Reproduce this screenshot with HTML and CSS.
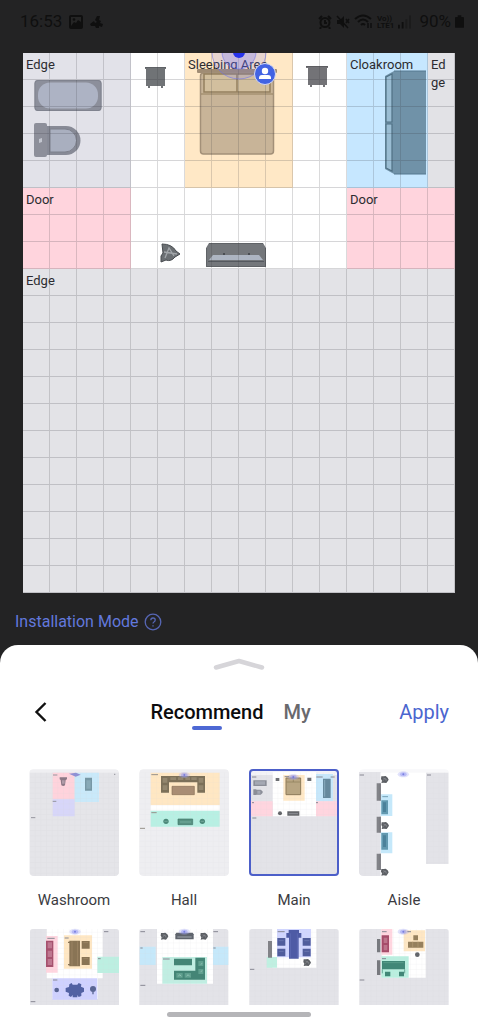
FILE: index.html
```html
<!DOCTYPE html>
<html lang="en">
<head>
<meta charset="utf-8">
<meta name="viewport" content="width=device-width, initial-scale=1">
<title>Room layout</title>
<link rel="stylesheet" href="styles.css">
</head>
<body>
<svg class="defs" aria-hidden="true">
  <defs>
    <pattern id="mini-grid" x="30" y="37" width="17" height="16" patternUnits="userSpaceOnUse">
      <path d="M16.500 0V16M0 15.500H17" stroke="#cfcfd6" stroke-width="1" fill="none"/>
    </pattern>
    <g id="radar"><ellipse rx="17" ry="9" fill="#a9acf4" opacity=".35"/><ellipse rx="10" ry="6" fill="#8a8ef0" opacity=".45"/><circle r="3" fill="#6066d8" opacity=".7"/></g>
    <g id="plant"><path d="M-10-10L-3-10 3-11 9-6 12 0 9 5 5 10-3 9-10 10-8 3-11-2Z" fill="#5c5f64"/><path d="M-6 5L1-5 5 4M-5-5L7 0" stroke="#8e9196" stroke-width="1.500" fill="none"/></g>
  </defs>
</svg>
<div class="screen">
  <header class="status">
    <div class="status-side">
      <span>16:53</span>
      <svg width="14" height="14" viewBox="0 0 14 14"><rect width="14" height="14" rx="2" fill="#0f0f0f"/><path d="M2 11V2H12V7L9 5 7 8 5 7Z" fill="#252525"/><circle cx="5" cy="4.500" r="1.300" fill="#0f0f0f"/></svg>
      <svg width="13" height="14" viewBox="0 0 13 14"><path d="M7 1L10 1 9 5 11 6 10 8 13 9 12 12 9 11 9 13 6 13 5 11 1 11 0 9 4 6 5 8 7 7 5 5Z" fill="#0f0f0f"/></svg>
    </div>
    <div class="status-side status-right">
      <svg width="14" height="14" viewBox="0 0 14 14" fill="none" stroke="#0f0f0f" stroke-width="2"><circle cx="7" cy="7.500" r="4.500"/><path d="M7 5V8H9M1 4L4 1M10 1L13 4M3 12L2 14M11 12L12 14"/></svg>
      <svg width="14" height="14" viewBox="0 0 14 14"><path d="M1 5H4L8 1V13L4 9H1Z" fill="#0f0f0f"/><path d="M1 1L12 13M10 4L13 8M13 4L10 8" stroke="#0f0f0f" stroke-width="1.500"/></svg>
      <svg width="19" height="15" viewBox="0 0 19 15" fill="none" stroke="#0f0f0f" stroke-width="2"><path d="M1 5Q9-2 17 5M4 8Q9 3 14 8M7 11Q9 9 11 11"/><path d="M14 9V14M17 9V14" stroke-width="1.500"/></svg>
      <span class="lte"><span>Vo))</span><span>LTE1</span></span>
      <svg width="13" height="14" viewBox="0 0 14 14"><path d="M0 10H2V14H0ZM4 7H6V14H4Z" fill="#0f0f0f"/><path d="M8 4H10V14H8ZM12 0H14V14H12Z" fill="#1b1b1b"/></svg>
      <span class="charge">90%</span>
      <svg width="9" height="13" viewBox="0 0 10 14"><path d="M3 0H7V2H9Q10 2 10 3V13Q10 14 9 14H1Q0 14 0 13V3Q0 2 1 2H3Z" fill="#0f0f0f"/></svg>
    </div>
  </header>

  <main class="map">
    <div class="zone zone-bath">Edge</div>
    <div class="zone zone-sleep">Sleeping Area</div>
    <div class="zone zone-cloak">Cloakroom</div>
    <div class="zone zone-side">Edge</div>
    <div class="zone zone-door-left">Door</div>
    <div class="zone zone-door-right">Door</div>
    <div class="zone zone-bottom">Edge</div>
    <svg class="scene" viewBox="23 53 432 540" aria-hidden="true">
      <defs>
        <pattern id="grid" x="23" y="53" width="27" height="27" patternUnits="userSpaceOnUse"><path d="M27 0V27M0 27H27" stroke="#30303c" stroke-opacity=".2" stroke-width="1.800" fill="none"/></pattern>
      </defs>
      <rect x="34.500" y="80" width="67" height="31" rx="3" fill="#8c8f9b"/>
      <rect x="38" y="82.500" width="60" height="26" rx="12" fill="#adb3c4"/>
      <rect x="35" y="80.500" width="66" height="30" rx="3" fill="none" stroke="#80838f"/>
      <path d="M47 126H66A14.500 14.500 0 0 1 66 155H47Z" fill="#878a96"/>
      <path d="M50 129H65A11.500 11.500 0 0 1 65 152H50Z" fill="#a9afbf" stroke="#7d808c"/>
      <rect x="34" y="123" width="13" height="34" rx="2" fill="#8d8f9a"/>
      <path d="M39 139L42 138V142L39 143Z" fill="#c3c6cf"/>
      <g fill="#707376"><path d="M145 67H166V69H145ZM146 69H165V86H146Z"/><path d="M148 86H150V88H148ZM161 86H163V88H161Z"/></g>
      <path d="M145 67.500H166" stroke="#5f6266" fill="none"/>
      <g fill="#737377"><path d="M306 66H328V68H306ZM308 68H327V85H308Z"/><path d="M310 85H312V87H310ZM323 85H325V87H323Z"/></g>
      <path d="M306 66.500H328" stroke="#5e5e62" fill="none"/>
      <rect x="197" y="69" width="80" height="4" rx="1" fill="#a08c74"/>
      <rect x="200.500" y="73" width="73" height="81" rx="3" fill="#c8b498" stroke="#a39078" stroke-width="1.500"/>
      <path d="M204 74H237V92H204ZM237 74H270V92H237Z" fill="#d2bf9e" stroke="#94805f" stroke-width="1.500"/>
      <path d="M201 94H273" stroke="#94805f"/>
      <path d="M385 76L394 71H426V174H394L385 169Z" fill="#7092a8"/>
      <path d="M386 77L392 74V122H386ZM386 124H392V171L386 168Z" fill="#9abdd3" stroke="#4f7084" stroke-width="1.200"/>
      <path d="M394 71H426M394 174H426" stroke="#557990"/>
      <path d="M209 243H263L266 248V267H206V248Z" fill="#74777b"/>
      <path d="M209 243.500H263M206.500 248V266.500H265.500V248" stroke="#606367" fill="none"/>
      <path d="M213 255H259L263 260H209Z" fill="#adb5c2"/>
      <path d="M208 261.500H264" stroke="#55595f"/><path d="M223 254H225M248 254H250" stroke="#3d4045" stroke-width="1.500"/>
      <path d="M162 244Q172 244 176 251L180 254 175 257Q171 262 166 260L161 262V256L163 253Z" fill="#6b6f73"/>
      <path d="M165 258L169 248 174 256M164 252L177 254" stroke="#a2a6aa" stroke-width="1.300" fill="none"/>
      <path d="M162 244Q172 244 176 251L180 254 175 257Q171 262 166 260L161 262V256L163 253Z" fill="none" stroke="#484c50"/>
      <rect x="23" y="53" width="432" height="540" fill="url(#grid)"/>
      <circle cx="239" cy="52" r="27" fill="#6a70ff" fill-opacity=".16" stroke="#6a70f0" stroke-opacity=".55"/>
      <circle cx="239" cy="52" r="17" fill="#6068ff" fill-opacity=".25" stroke="#6a70f0" stroke-opacity=".55"/>
      <circle cx="239" cy="52" r="6" fill="#2733ea"/>
      <circle cx="265" cy="74" r="10.500" fill="#4263e3" stroke="#d4d8f4"/>
      <circle cx="265" cy="71" r="3.200" fill="#fff"/><path d="M259 79V78Q259 75 262 75H268Q271 75 271 78V79Z" fill="#fff"/>
    </svg>
  </main>

  <a class="mode" href="#installation">Installation Mode
    <svg width="18" height="18" viewBox="0 0 18 18" fill="none" stroke="#5666b4" stroke-width="1.300"><circle cx="9" cy="9" r="7.800"/><path d="M6.800 7.300Q6.800 5 9 5T11.200 7.100Q11.200 8.300 9.900 9 9 9.500 9 10.600"/><path d="M9 12.200V13.500"/></svg>
  </a>

  <section class="sheet">
    <button class="handle" aria-label="Expand panel"><svg width="52" height="12" viewBox="0 0 52 12"><path d="M3 9.500L26 3 49 9.500" fill="none" stroke="#d6d5d9" stroke-width="4.500" stroke-linecap="round" stroke-linejoin="round"/></svg></button>
    <nav class="bar">
      <button class="back" aria-label="Back"><svg width="20" height="22" viewBox="0 0 20 22"><path d="M15.500 2L6.500 11 15.500 20" fill="none" stroke="#111" stroke-width="2.400"/></svg></button>
      <div class="tabs">
        <button class="tab tab-active">Recommend</button>
        <button class="tab">My</button>
      </div>
      <button class="apply">Apply</button>
    </nav>

    <div class="layouts">
      <button class="card"><svg class="thumb" viewBox="27 27 270 321">
        <rect x="28" y="28" width="269" height="320" rx="12" fill="#efeff2"/>
        <path d="M30 38H297V336Q297 348 285 348H42Q30 348 30 336Z" fill="#e5e5e9"/>
        <path d="M98 38H164V118H98Z" fill="#ffd3dc"/><path d="M164 38H237V126H164Z" fill="#c9e9fa"/><path d="M98 118H164V169H98Z" fill="#d7d6f9"/>
        <rect x="30" y="37" width="267" height="311" fill="url(#mini-grid)" opacity=".6"/>
        <path d="M119 52H141V58L137 60 135 76Q130 80 124 76L122 60 119 58Z" fill="#8c7986"/><path d="M126 61H134V71H126Z" fill="#b09ca8"/>
        <path d="M195 53H216V92H195Z" fill="#7797a5"/><path d="M199 61H212V86H199Z" fill="#88a9b7"/>
        <path d="M147 41L168 38 182 44 167 50Z" fill="#8f91d4"/><path d="M33 173H46M99 45H112M98 124H109M282 43H286" stroke="#95959d" stroke-width="3"/>
      </svg><span>Washroom</span></button>

      <button class="card"><svg class="thumb" viewBox="27 27 270 321">
        <rect x="28" y="28" width="269" height="320" rx="12" fill="#eeeef1"/>
        <path d="M62 38H269V136H62Z" fill="#ffe7c3"/><path d="M62 136H269V152H62Z" fill="#fff"/><path d="M62 152H269V200H62Z" fill="#b7f0e3"/>
        <rect x="28" y="37" width="269" height="311" fill="url(#mini-grid)" opacity=".4"/>
        <path d="M93 48H225V98H202V67H117V98H93Z" fill="#7c7059"/><path d="M98 54H112V68H98ZM98 76H112V90H98ZM206 54H220V68H206ZM206 76H220V90H206ZM121 52H138V60H121ZM144 52H160V60H144ZM166 52H180V60H166ZM184 52H200V60H184Z" fill="#93866e"/>
        <use href="#radar" x="163" y="45"/>
        <path d="M126 79H193V104H126Z" fill="#a98d74" stroke="#8a7158" stroke-width="2"/>
        <path d="M144 177H188V194H144Z" fill="#579181" stroke="#417668" stroke-width="2"/><path d="M150 186H183" stroke="#83bbac" stroke-width="2"/>
        <circle cx="108" cy="184" r="8" fill="#4c8879"/><circle cx="217" cy="184" r="8" fill="#4c8879"/>
        <path d="M103 184H113M212 184H222" stroke="#83b4a8" stroke-width="2"/><path d="M64 44H84M64 158H80M30 205H45" stroke="#96918a" stroke-width="3"/>
      </svg><span>Hall</span></button>

      <button class="card card-selected" aria-pressed="true"><svg class="thumb" viewBox="27 27 270 321">
        <rect x="28" y="28" width="268" height="319" fill="#e3e3e8"/>
        <path d="M27 27H297V45H27Z" fill="#f3f3f7"/>
        <path d="M98 36H228V169H98Z" fill="#fff"/><path d="M130 45H194V122H130Z" fill="#ffe8c6"/><path d="M228 42H279V124H228Z" fill="#c6e7fb"/><path d="M30 124H98V169H30ZM228 124H296V169H228Z" fill="#ffd5df"/>
        <rect x="30" y="37" width="267" height="311" fill="url(#mini-grid)" opacity=".5"/>
        <path d="M40 61H80V78H40ZM40 88H49V105H40ZM49 89H62Q75 96 62 104H49Z" fill="#8b8e98"/><path d="M45 64H75V74H45ZM52 92H61V101H52Z" fill="#a4a8b3"/>
        <path d="M107 54H118V63H107ZM202 53H214V63H202Z" fill="#6c6e72"/><path d="M138 54H182V104H138Z" fill="#b8a582" stroke="#8d7b59" stroke-width="3"/><path d="M139 66H181M160 55V66" stroke="#8d7b59" stroke-width="2"/>
        <path d="M249 56H272V114H249Z" fill="#66899d"/><path d="M254 60V110" stroke="#88abbd" stroke-width="3"/>
        <path d="M142 154H178V167H142Z" fill="#64666a"/><path d="M146 161H174" stroke="#a1a5ab" stroke-width="2"/><circle cx="120" cy="160" r="6" fill="#64666a"/>
        <use href="#radar" x="160" y="51"/><path d="M36 51H49M229 51H248M272 51H284M36 128H42M228 128H234M37 174H49M134 50H148" stroke="#888893" stroke-width="3"/>
      </svg><span>Main</span></button>

      <button class="card"><svg class="thumb" viewBox="27 27 270 321">
        <rect x="28" y="28" width="269" height="320" rx="12" fill="#f8f8fa"/>
        <path d="M27 36H92V348H39Q27 348 27 336Z" fill="#e3e3e8"/><path d="M92 38H228V348H92Z" fill="#fff"/><path d="M228 38H295V312H228Z" fill="#e3e3e8"/><path d="M228 312H297V348H228Z" fill="#fff"/>
        <path d="M92 103H127V168H92ZM92 217H127V280H92Z" fill="#c5e8fa"/>
        <rect x="28" y="37" width="64" height="311" fill="url(#mini-grid)" opacity=".5"/><rect x="228" y="37" width="67" height="275" fill="url(#mini-grid)" opacity=".4"/>
        <use href="#radar" x="160" y="43"/>
        <path d="M80 70H92V122H80ZM80 170H92V218H80ZM80 281H92V330H80Z" fill="#828388"/><path d="M91 70V122M91 170V218M91 281V330" stroke="#626469" stroke-width="2"/>
        <path d="M94 121H114V163H94ZM94 219H114V269H94Z" fill="#6299b0"/><path d="M99 127H108V156H99ZM99 226H108V261H99Z" fill="#4b819a"/><path d="M97 110H114" stroke="#739fb4" stroke-width="3"/>
        <use href="#plant" x="104" y="59"/><use href="#plant" x="105" y="197"/><use href="#plant" x="104" y="337"/>
        <path d="M29 45H42M231 45H243" stroke="#888893" stroke-width="3"/>
      </svg><span>Aisle</span></button>

      <button class="card" aria-label="Dining and lounge layout"><svg class="thumb" viewBox="27 33 270 321">
        <rect x="30" y="42" width="267" height="312" rx="8" fill="#e3e3e8"/>
        <path d="M80 42H248V190H234V252H97V190H80Z" fill="#fff"/>
        <path d="M78 63H113V173H78Z" fill="#ffd5df"/><path d="M132 61H216V161H132Z" fill="#ffe7c3"/><path d="M232 125H297V174H232Z" fill="#bcefe1"/><path d="M97 190H232V254H97Z" fill="#cfd1ff"/>
        <rect x="30" y="42" width="267" height="306" fill="url(#mini-grid)" opacity=".5"/>
        <use href="#radar" x="165" y="50"/>
        <path d="M78 77H100V156H78Z" fill="#a6516e"/><path d="M83 82H96V100H83ZM83 107H96V126H83ZM83 132H96V150H83Z" fill="#bf7790"/>
        <path d="M148 77H180V154H148ZM185 78H209V101H185ZM185 126H209V150H185Z" fill="#897455"/><path d="M156 79V152M173 79V152M190 83H204M190 131H204" stroke="#a48d6a" stroke-width="2"/>
        <path d="M144 80H150V84H144ZM144 147H150V151H144Z" fill="#897455"/>
        <path d="M148 208L155 204 158 209H172L176 204 184 208 183 215 192 219V230L184 234 184 243 176 246 172 240V247H158V240L153 246 146 242 147 234 137 230V219L147 216Z" fill="#5261a3"/><circle cx="110" cy="225" r="7" fill="#596594"/><circle cx="219" cy="222" r="9" fill="#596594"/><path d="M219 230V238" stroke="#596594" stroke-width="4"/>
        <path d="M82 70H104M134 69H146M234 131H242M99 195H112M32 260H46M252 50H265" stroke="#888893" stroke-width="3"/>
      </svg></button>

      <button class="card" aria-label="Lounge layout"><svg class="thumb" viewBox="27 33 270 321">
        <rect x="28" y="42" width="267" height="312" rx="8" fill="#e3e3e8"/>
        <path d="M81 42H249V206H81Z" fill="#fff"/><path d="M29 95H77V150H29ZM249 95H295V150H249Z" fill="#c5e8fa"/><path d="M97 126H231V206H97Z" fill="#c0eee2"/>
        <rect x="28" y="42" width="267" height="306" fill="url(#mini-grid)" opacity=".5"/>
        <path d="M139 53H188L191 58V73H136V58Z" fill="#5f646d"/><path d="M142 66H185" stroke="#a3a8b0" stroke-width="3"/>
        <use href="#radar" x="163" y="50"/>
        <use href="#plant" x="103" y="64"/><use href="#plant" x="222" y="64"/>
        <path d="M132 131H186V151H132ZM196 128H225V194H132V167H196Z" fill="#448576"/><path d="M205 138H220V153H205ZM205 162H220V177H205ZM139 174H158V188H139ZM164 174H183V188H164Z" fill="#60a08f"/>
        <path d="M212 148L217 145M212 170L217 167M145 184L149 179 154 184M170 184L174 179 179 184" stroke="#a4cec3" stroke-width="2" fill="none"/><path d="M99 132H119M31 50H45M250 50H264M31 99H38M250 99H257M31 211H46" stroke="#888893" stroke-width="3"/>
      </svg></button>

      <button class="card" aria-label="Meeting layout"><svg class="thumb" viewBox="27 33 270 321">
        <rect x="28" y="42" width="268" height="312" rx="8" fill="#e3e3e8"/>
        <path d="M96 42H229V158H96Z" fill="#fff"/><path d="M111 42H213V127H111Z" fill="#d0d5ff"/><path d="M80 126H111V158H80Z" fill="#bff0e1"/>
        <rect x="28" y="42" width="268" height="306" fill="url(#mini-grid)" opacity=".5"/>
        <path d="M146 45H177V54H184V68H176V131H147V68H139V54H146Z" fill="#4e5ba5"/><path d="M151 55V128M172 55V128" stroke="#6370b8" stroke-width="2"/>
        <path d="M112 69H136V92H112ZM112 101H136V124H112ZM188 69H212V92H188ZM188 101H212V124H188Z" fill="#505d9c"/><path d="M116 77H131M116 109H131M193 77H208M193 109H208" stroke="#7480b8" stroke-width="2"/>
        <path d="M84 78H96V128H84Z" fill="#818287"/><use href="#plant" x="201" y="143"/><path d="M113 50H134M30 163H43" stroke="#888893" stroke-width="3"/>
      </svg></button>

      <button class="card" aria-label="Office layout"><svg class="thumb" viewBox="27 33 270 321">
        <rect x="28" y="42" width="268" height="312" rx="8" fill="#e3e3e8"/>
        <path d="M95 42H227V188H95Z" fill="#fff"/><path d="M94 42H127V119H94Z" fill="#ffd5df"/><path d="M161 46H225V109H161Z" fill="#ffe7c3"/><path d="M94 124H176V188H94Z" fill="#b9efdf"/>
        <rect x="28" y="42" width="268" height="306" fill="url(#mini-grid)" opacity=".5"/>
        <use href="#radar" x="160" y="50"/>
        <path d="M95 61H117V112H95Z" fill="#a64c6a"/><path d="M101 68H112V84H101ZM101 90H112V106H101Z" fill="#bd748b"/>
        <path d="M174 80H220V98H174ZM190 61H204V76H190Z" fill="#96805d"/><path d="M188 80V98M204 80V98" stroke="#b39b73" stroke-width="2"/>
        <path d="M96 138H165V163H96ZM105 170H121V184H105ZM147 170H162V184H147Z" fill="#418777"/><path d="M97 163V175M164 163V175" stroke="#418777" stroke-width="2"/><path d="M100 143H161" stroke="#66a796" stroke-width="2"/>
        <path d="M81 72H91V112H81ZM81 136H91V180H81Z" fill="#77797e"/><circle cx="202" cy="119" r="7" fill="#63666b"/><path d="M96 50H110M96 131H108M29 195H43M172 50H183" stroke="#888893" stroke-width="3"/>
      </svg></button>
    </div>
    <div class="home"></div>
  </section>
</div>
</body>
</html>
```

FILE: styles.css
```css
* { box-sizing: border-box; }
body { margin: 0; background: #232324; font-family: Roboto, sans-serif; }
button { padding: 0; border: 0; background: none; font: inherit; color: inherit; cursor: pointer; }
svg { display: block; flex-shrink: 0; }
.defs { position: absolute; width: 0; height: 0; }

.screen { display: flex; flex-direction: column; height: 100vh; }

.status { display: flex; justify-content: space-between; padding: 11px 14px 21px 20px; color: #0f0f0f; font-size: 17px; line-height: 21px; }
.status-side { display: flex; align-items: center; gap: 7px; }
.status-right { gap: 4px; }
.lte { display: flex; flex-direction: column; font-size: 8px; line-height: 7px; font-weight: 700; }
.charge { padding-left: 4px; }

.map { display: grid; grid-template: repeat(20, 1fr) / repeat(16, 1fr); flex-shrink: 0; margin: 0 23px; aspect-ratio: 4 / 5; background: #fff; }
.zone { min-width: 0; min-height: 0; padding: 3px; color: #2c2c30; font-size: 13px; line-height: 18px; word-break: break-all; }
.zone-bath { grid-area: 1 / 1 / 6 / 5; background: #e2e2e9; }
.zone-sleep { grid-area: 1 / 7 / 6 / 11; background: #ffe8c6; }
.zone-cloak { grid-area: 1 / 13 / 6 / 16; background: #c6e7ff; }
.zone-side { grid-area: 1 / 16 / 6 / 17; background: #e2e2e6; }
.zone-door-left { grid-area: 6 / 1 / 9 / 5; background: #ffd4dd; }
.zone-door-right { grid-area: 6 / 13 / 9 / 17; background: #ffd4dd; }
.zone-bottom { grid-area: 9 / 1 / 21 / 17; background: #e3e3e7; }
.scene { grid-area: 1 / 1 / 21 / 17; width: 100%; height: 100%; }

.mode { display: flex; align-items: center; align-self: flex-start; gap: 5px; padding: 17px 15px 11px; color: #6278dc; font-size: 16px; line-height: 24px; text-decoration: none; }

.sheet { display: flex; flex: 1; flex-direction: column; min-height: 0; border-radius: 18px 18px 0 0; background: #fff; }
.handle { display: flex; justify-content: center; padding: 13px 0 12px; }
.bar { display: flex; align-items: center; justify-content: space-between; padding: 12px 29px 0 30px; font-size: 20px; line-height: 36px; }
.back { display: flex; align-items: center; width: 32px; height: 36px; }
.tabs { display: flex; gap: 20px; }
.tab { position: relative; color: #69696d; font-weight: 500; }
.tab-active { color: #0c0c0e; }
.tab-active::after { content: ""; position: absolute; bottom: 0; left: 50%; width: 30px; height: 4px; margin-left: -15px; border-radius: 2px; background: #4d68d4; }
.apply { color: #4b66cf; }

.layouts { display: grid; flex: 1; grid-template-columns: repeat(4, 1fr); align-content: start; gap: 16px 20px; min-height: 0; margin-top: 39px; padding: 0 29px; overflow: hidden; }
.card { display: flex; flex-direction: column; gap: 14px; color: #3b3b3f; font-size: 15px; line-height: 20px; text-align: center; }
.card span { align-self: center; }
.thumb { width: 100%; border-radius: 4px; }
.card-selected .thumb { outline: 2px solid #4c5fc9; outline-offset: -2px; }
.home { flex-shrink: 0; width: 30%; height: 5px; margin: 7px auto; border-radius: 3px; background: #b5b5b8; }
```
